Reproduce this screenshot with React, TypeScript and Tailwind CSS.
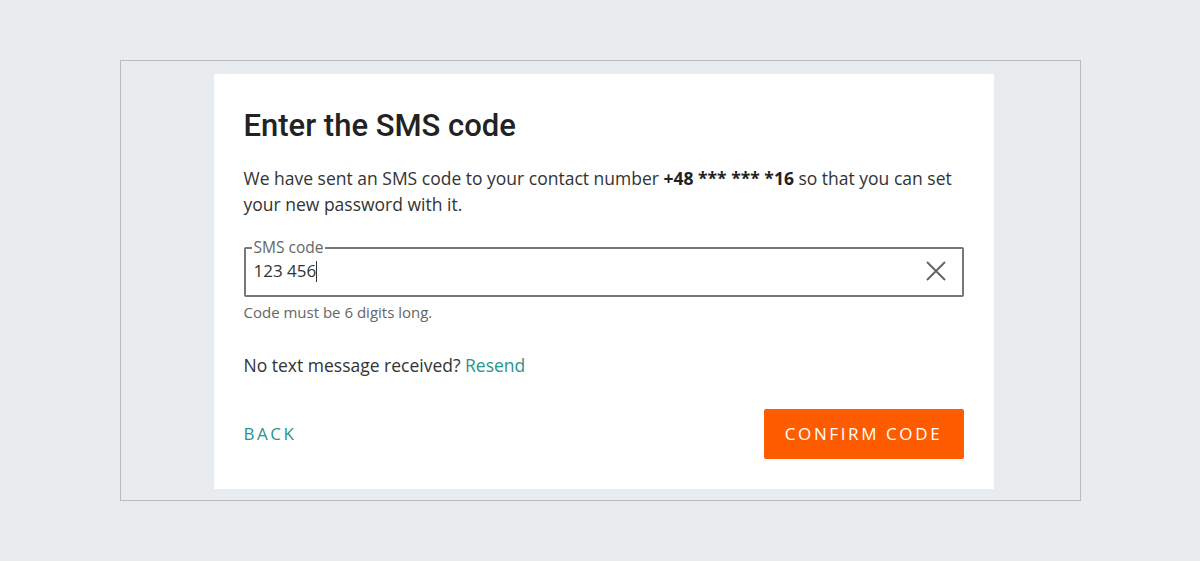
import React from "react";

export default function App() {
  return (
    <div className="min-h-[561px] w-full bg-[#e9ecef] pt-[60px]" style={{ fontFamily: '"Open Sans", sans-serif' }}>
      <div className="mx-auto w-[961px] h-[441px] border border-[#b9bcbf] pt-[13px] pl-[93px] flex">
        <div className="w-[780px] h-[415px] bg-white px-[30px] pt-[34px]">
          <h1 className="text-[31px] leading-[36px] font-medium text-[#222]" style={{ fontFamily: "Roboto, sans-serif" }}>
            Enter the SMS code
          </h1>
          <p className="mt-[21px] text-[17.5px] leading-[26px] text-[#333]">
            We have sent an SMS code to your contact number <b className="font-bold text-[#222]">+48 *** *** *16</b> so that you can set your new password with it.
          </p>
          <fieldset className="mt-[23px] h-[57px] border-2 border-[#777] rounded-[2px] pl-[8px] pr-[16px] flex items-center relative">
            <legend className="ml-[-2px] px-[2px] text-[15.5px] leading-[15px] text-[#666]">SMS code</legend>
            <div className="flex-1 text-[17px] text-[#333] flex items-center -mt-[8px]">
              123 456<span className="inline-block w-px h-[21px] bg-[#333]" />
            </div>
            <svg width="20" height="20" viewBox="0 0 20 20" className="-mt-[8px]" fill="none" stroke="#666" strokeWidth="2">
              <path d="M1 1 L19 19 M19 1 L1 19" />
            </svg>
          </fieldset>
          <div className="mt-[5px] text-[15px] leading-[20px] text-[#666]">Code must be 6 digits long.</div>
          <div className="mt-[31px] text-[17.5px] leading-[24px] text-[#333]">
            No text message received? <span className="text-[#2a948a]">Resend</span>
          </div>
          <div className="mt-[32px] flex items-center justify-between">
            <span className="text-[17px] tracking-[2.5px] text-[#2a948a]">BACK</span>
            <button className="w-[200px] h-[50px] bg-[#ff5c00] rounded-[2px] text-white text-[17px] tracking-[2.6px]">
              CONFIRM CODE
            </button>
          </div>
        </div>
      </div>
    </div>
  );
}
